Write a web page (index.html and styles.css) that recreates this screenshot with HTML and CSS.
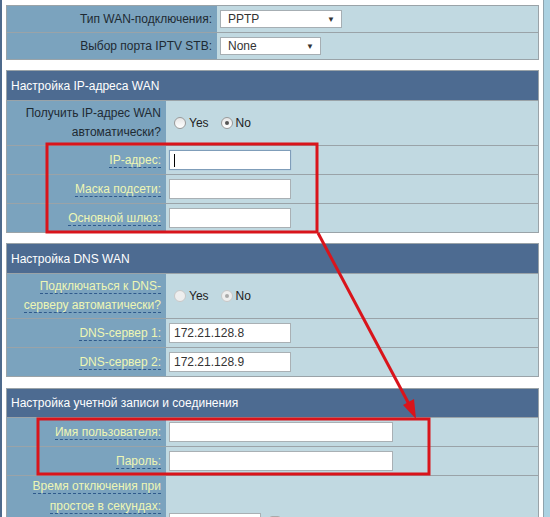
FILE: index.html
```html
<!DOCTYPE html>
<html lang="ru">
<head>
<meta charset="utf-8">
<link rel="stylesheet" href="styles.css">
</head>
<body>
<div class="page">
  <div class="content">
    <section class="form top">
      <div class="row r26">
        <div class="label"><div class="txt">Тип WAN-подключения:</div></div>
        <div class="value"><div class="select w122"><span>PPTP</span><span class="arrow">▼</span></div></div>
      </div>
      <div class="row r27">
        <div class="label"><div class="txt">Выбор порта IPTV STB:</div></div>
        <div class="value"><div class="select w101"><span>None</span><span class="arrow">▼</span></div></div>
      </div>
    </section>

    <section class="form">
      <div class="head">Настройка IP-адреса WAN</div>
      <div class="row r45">
        <div class="label"><div class="txt">Получить IP-адрес WAN<br>автоматически?</div></div>
        <div class="value"><span class="radios"><span class="radio"></span>Yes<span class="radio on"></span>No</span></div>
      </div>
      <div class="row r29">
        <div class="label"><div class="txt"><span class="hint">IP-адрес:</span></div></div>
        <div class="value"><div class="input w122 focus"><span class="caret"></span></div></div>
      </div>
      <div class="row r29">
        <div class="label"><div class="txt"><span class="hint">Маска подсети:</span></div></div>
        <div class="value"><div class="input w122"></div></div>
      </div>
      <div class="row r29">
        <div class="label"><div class="txt"><span class="hint">Основной шлюз:</span></div></div>
        <div class="value"><div class="input w122"></div></div>
      </div>
    </section>

    <section class="form">
      <div class="head">Настройка DNS WAN</div>
      <div class="row r45">
        <div class="label"><div class="txt"><span class="hint">Подключаться к DNS-<br>серверу автоматически?</span></div></div>
        <div class="value"><span class="radios disabled"><span class="radio"></span>Yes<span class="radio on"></span>No</span></div>
      </div>
      <div class="row r29">
        <div class="label"><div class="txt"><span class="hint">DNS-сервер 1:</span></div></div>
        <div class="value"><div class="input w122">172.21.128.8</div></div>
      </div>
      <div class="row r29">
        <div class="label"><div class="txt"><span class="hint">DNS-сервер 2:</span></div></div>
        <div class="value"><div class="input w122">172.21.128.9</div></div>
      </div>
    </section>

    <section class="form last">
      <div class="head h28">Настройка учетной записи и соединения</div>
      <div class="row r29">
        <div class="label"><div class="txt"><span class="hint">Имя пользователя:</span></div></div>
        <div class="value"><div class="input w224"></div></div>
      </div>
      <div class="row r29">
        <div class="label"><div class="txt"><span class="hint">Пароль:</span></div></div>
        <div class="value"><div class="input w224"></div></div>
      </div>
      <div class="row rlast">
        <div class="label"><div class="txt"><span class="hint">Время отключения при<br>простое в секундах:</span></div></div>
        <div class="value"><div class="bottom-row"><div class="input w92"></div><span class="check"></span></div></div>
      </div>
    </section>

    <svg class="annot" width="550" height="517" viewBox="0 0 550 517">
      <rect x="47" y="144" width="270" height="88" fill="none" stroke="#d9141b" stroke-width="3"/>
      <rect x="38" y="419" width="391" height="55" fill="none" stroke="#d9141b" stroke-width="3"/>
      <line x1="318" y1="233" x2="410" y2="406" stroke="#d9141b" stroke-width="3"/>
      <polygon points="416,419 403,405 414,399" fill="#d9141b"/>
    </svg>
  </div>
  <div class="side"></div>
</div>
</body>
</html>
```
FILE: styles.css
```css
* { box-sizing: border-box; }
html, body { margin: 0; padding: 0; background: #fff; }
body {
  font-family: "Liberation Sans", Arial, sans-serif;
  font-size: 12px;
  color: #222;
  width: 550px;
  height: 517px;
  overflow: hidden;
}
.page {
  display: flex;
  height: 517px;
  border-left: 2px solid #4e6a8c;
}
.content {
  position: relative;
  width: 541px;
  padding: 5px 0 0 4px;
}
.side {
  flex: 1;
  border-left: 1px solid #8fa3ad;
  background: #acd2e2;
}
.form {
  width: 533px;
  border: 1px solid #9aa3a8;
  margin-bottom: 10px;
  background: #c1d9e1;
}
.form.last { margin-top: 11px; border-bottom: none; }
.head {
  height: 29px;
  background: #4d6b91;
  color: #fff;
  display: flex;
  align-items: center;
  padding-left: 4px;
  font-size: 12px;
}
.head.h28 { height: 28px; }
.row {
  display: grid;
  grid-template-columns: 159px 1fr;
  border-top: 1px solid #9aa3a8;
}
.top .row { grid-template-columns: 210px 1fr; }
.top .row:first-child { border-top: none; }
.r26 { height: 26px; }
.r27 { height: 27px; }
.r29 { height: 29px; }
.r45 { height: 45px; }
.rlast { height: 60px; }
.label {
  background: #7ba3be;
  padding-right: 5px;
  display: flex;
  align-items: center;
  justify-content: flex-end;
  color: #1e2a33;
}
.txt {
  text-align: right;
  line-height: 19px;
}
.rlast .label { align-items: flex-start; }
.rlast .txt { line-height: 20px; }
.value {
  display: flex;
  align-items: center;
  padding-left: 3px;
}
.hint {
  color: #eef6b4;
  border-bottom: 1px dashed #2f5a8c;
}
.select {
  display: flex;
  justify-content: space-between;
  align-items: center;
  height: 18px;
  background: #fff;
  border: 1px solid #a6aeb3;
  padding: 0 6px 0 7px;
  font-size: 12px;
  color: #333;
}
.select .arrow { font-size: 8px; color: #333; }
.w122 { width: 122px; }
.w101 { width: 101px; }
.w92 { width: 92px; }
.w224 { width: 224px; }
.input {
  height: 20px;
  background: #fff;
  border: 1px solid #a9b0b4;
  padding: 0 4px;
  line-height: 18px;
  font-size: 12px;
  color: #333;
}
.input.focus { border-color: #7f9db9; box-shadow: 0 0 1px #9ab8d8; }
.caret {
  display: inline-block;
  width: 1px;
  height: 13px;
  background: #000;
  vertical-align: middle;
}
.radios { display: inline-flex; align-items: center; padding-left: 5px; color: #222; }
.radio {
  display: inline-block;
  width: 12px;
  height: 12px;
  border-radius: 50%;
  border: 1px solid #9a9a9a;
  background: linear-gradient(#e6e6e6, #fff);
  margin-right: 3px;
  position: relative;
}
.radios .radio.on { margin-left: 12px; }
.radio.on::after {
  content: "";
  position: absolute;
  left: 3px; top: 3px;
  width: 4px; height: 4px;
  border-radius: 50%;
  background: #555;
}
.radios.disabled .radio { border-color: #c8c8c8; background: #eee; }
.radios.disabled .radio.on::after { background: #aaa; }
.rlast .value { align-items: flex-start; }
.bottom-row {
  display: flex;
  align-items: center;
  gap: 8px;
  margin-top: 37px;
}
.check {
  display: inline-block;
  width: 12px; height: 14px;
  border: 1px solid #aaa;
  border-radius: 3px;
  background: #eee;
}
.annot {
  position: absolute;
  left: -2px;
  top: 0;
  pointer-events: none;
}
```
